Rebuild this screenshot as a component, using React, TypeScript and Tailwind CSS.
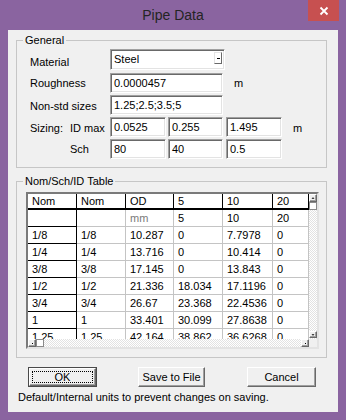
import React from "react";

const sunken =
  "bg-white border border-t-[#a0a0a0] border-l-[#a0a0a0] border-r-white border-b-white shadow-[inset_1px_1px_0_#696969,inset_-1px_-1px_0_#e3e3e3]";
const raised =
  "bg-[#f0f0f0] border border-t-white border-l-white border-r-[#696969] border-b-[#696969] shadow-[inset_-1px_-1px_0_#a0a0a0]";

function Field({ w, children }: { w: string; children?: React.ReactNode }) {
  return (
    <div className={`h-[20px] ${sunken} flex items-center pl-[3px] ${w}`}>
      <span className="leading-[13px]">{children}</span>
    </div>
  );
}

function Btn({ children, def, w }: { children: React.ReactNode; def?: boolean; w: string }) {
  if (def) {
    return (
      <div className={`h-[20px] ${w} border border-[#4a4a4a] flex`}>
        <div className={`flex-1 ${raised} flex p-[2px]`}>
          <div className="flex-1 border border-dotted border-black flex items-center justify-center leading-[13px] text-[11px]">
            {children}
          </div>
        </div>
      </div>
    );
  }
  return (
    <div className={`h-[20px] ${w} ${raised} flex items-center justify-center leading-[13px] text-[11px] whitespace-nowrap`}>
      {children}
    </div>
  );
}

const dither =
  "[background-image:repeating-conic-gradient(#e2e2e2_0%_25%,#ffffff_0%_50%)] [background-size:2px_2px]";

function Arrow({ dir }: { dir: "up" | "down" | "left" | "right" }) {
  const pts =
    dir === "up"
      ? "2,5 4,3 6,5"
      : dir === "down"
      ? "2,3 4,5 6,3"
      : dir === "left"
      ? "5,2 3,4 5,6"
      : "3,2 5,4 3,6";
  return (
    <svg width="8" height="8" viewBox="0 0 8 8" className="block">
      <polygon points={pts} fill="#000" />
    </svg>
  );
}

const header = ["Nom", "Nom", "OD", "5", "10", "20"];
const units = ["", "", "mm", "5", "10", "20"];
const rows = [
  ["1/8", "1/8", "10.287", "0", "7.7978", "0"],
  ["1/4", "1/4", "13.716", "0", "10.414", "0"],
  ["3/8", "3/8", "17.145", "0", "13.843", "0"],
  ["1/2", "1/2", "21.336", "18.034", "17.1196", "0"],
  ["3/4", "3/4", "26.67", "23.368", "22.4536", "0"],
  ["1", "1", "33.401", "30.099", "27.8638", "0"],
  ["1.25", "1.25", "42.164", "38.862", "36.6268", "0"],
];

function Table() {
  return (
    <div className="grid grid-cols-[49px_49px_48px_49px_50px_1fr] bg-white">
      {header.map((h, i) => (
        <div
          key={"h" + i}
          className="h-[16px] flex items-center pl-[4px] border-r border-b-2 border-r-black border-b-black whitespace-nowrap overflow-hidden"
        >
          {h}
        </div>
      ))}
      {units.map((u, i) => (
        <div
          key={"u" + i}
          className={`h-[17px] flex items-center pl-[4px] border-r border-b whitespace-nowrap overflow-hidden ${
            i === 0 ? "border-black" : "border-[#c4c4c4]"
          } ${i === 2 ? "text-[#7a7a7a]" : "text-black"}`}
        >
          {u}
        </div>
      ))}
      {rows.map((r, ri) =>
        r.map((c, i) => (
          <div
            key={ri + "-" + i}
            className={`h-[17px] flex items-center pl-[4px] border-r border-b whitespace-nowrap overflow-hidden ${
              i === 0 ? "border-black" : "border-[#c4c4c4]"
            }`}
          >
            {c}
          </div>
        ))
      )}
    </div>
  );
}

export default function App() {
  return (
    <div className="w-[346px] h-[420px] bg-[#8a64a0] flex flex-col font-['Liberation_Sans',Arial,sans-serif] text-[11px] leading-[13px] text-black">
      <div className="relative h-[30px] flex items-center justify-center shrink-0">
        <span className="text-[14px] leading-[16px] text-[#242424] font-['Liberation_Sans',Arial,sans-serif] mb-[1px]">
          Pipe Data
        </span>
        <div className="absolute right-[7px] top-0 w-[31px] h-[21px] bg-[#c75050] flex items-center justify-center">
          <svg width="10" height="10" viewBox="0 0 10 10">
            <path d="M1.5 1.5 L8.5 8.5 M8.5 1.5 L1.5 8.5" stroke="#fff" strokeWidth="1.8" />
          </svg>
        </div>
      </div>

      <div className="mx-[8px] h-[382px] bg-[#f0f0f0] pt-[4px] pl-[8px] pr-[11px] flex flex-col">
        {/* General */}
        <fieldset className="border border-[#c6c6c6] m-0 p-0">
          <legend className="ml-[6px] px-[2px] leading-[13px]">General</legend>
          <div className="pl-[13px] pt-[2px] pb-[8px] flex flex-col">
            <div className="flex items-center h-[21px] mb-[3px]">
              <div className="w-[80px] pt-[5px]">Material</div>
              <div className={`h-[21px] w-[115px] ${sunken} flex items-start pl-[3px] relative`}>
                <span className="mt-[3px] flex-1">Steel</span>
                <div className="mt-[2px] mr-[2px] w-[8px] h-[12px] bg-white border border-t-[#e3e3e3] border-l-[#e3e3e3] border-r-[#696969] border-b-[#696969] flex items-center justify-center">
                  <div className="w-[3px] h-[1px] bg-black mt-[1px]" />
                </div>
              </div>
            </div>
            <div className="flex items-center h-[20px] mb-[2px]">
              <div className="w-[80px] pt-[1px]">Roughness</div>
              <Field w="w-[113px]">0.0000457</Field>
              <div className="ml-[11px] pt-[1px]">m</div>
            </div>
            <div className="flex items-center h-[20px] mb-[2px]">
              <div className="w-[80px] pt-[2px]">Non-std sizes</div>
              <Field w="w-[113px]">1.25;2.5;3.5;5</Field>
            </div>
            <div className="flex items-center h-[20px] mb-[2px]">
              <div className="w-[40px] pt-[2px]">Sizing:</div>
              <div className="w-[40px] pt-[2px]">ID max</div>
              <Field w="w-[56px]">0.0525</Field>
              <div className="ml-[2px]">
                <Field w="w-[55px]">0.255</Field>
              </div>
              <div className="ml-[3px]">
                <Field w="w-[56px]">1.495</Field>
              </div>
              <div className="ml-[11px] pt-[2px]">m</div>
            </div>
            <div className="flex items-center h-[20px]">
              <div className="w-[40px]" />
              <div className="w-[40px] pt-[1px]">Sch</div>
              <Field w="w-[56px]">80</Field>
              <div className="ml-[2px]">
                <Field w="w-[55px]">40</Field>
              </div>
              <div className="ml-[3px]">
                <Field w="w-[56px]">0.5</Field>
              </div>
            </div>
          </div>
        </fieldset>

        {/* Table */}
        <fieldset className="border border-[#c6c6c6] m-0 p-0 mt-[7px]">
          <legend className="ml-[6px] px-[2px] leading-[13px]">Nom/Sch/ID Table</legend>
          <div className="pl-[9px] pr-[7px] pt-[4px] pb-[8px]">
            <div className="h-[157px] border-2 border-t-[#7a7a7a] border-l-[#7a7a7a] border-r-[#e3e3e3] border-b-[#e3e3e3] flex flex-col bg-white">
              <div className="flex flex-1 min-h-0">
                <div className="flex-1 overflow-hidden">
                  <Table />
                </div>
                <div className={`w-[8px] flex flex-col ${dither}`}>
                  <div className={`h-[8px] ${raised} flex items-center justify-center`}>
                    <Arrow dir="up" />
                  </div>
                  <div className="h-[8px] bg-white border border-[#8a8a8a]" />
                  <div className="flex-1" />
                  <div className={`h-[7px] ${raised} flex items-center justify-center mb-[1px]`}>
                    <Arrow dir="down" />
                  </div>
                </div>
              </div>
              <div className={`h-[8px] flex ${dither}`}>
                <div className={`w-[8px] ${raised} flex items-center justify-center`}>
                  <div className="w-[1px] h-[1px] bg-black" />
                </div>
                <div className="w-[8px] bg-white border border-[#8a8a8a]" />
                <div className="flex-1" />
                <div className={`w-[8px] ${raised} flex items-center justify-center`}>
                  <div className="w-[1px] h-[1px] bg-black" />
                </div>
                <div className="w-[8px] bg-[#f0f0f0]" />
              </div>
            </div>
          </div>
        </fieldset>

        {/* Buttons */}
        <div className="flex mt-[9px] pl-[12px]">
          <Btn def w="w-[69px]">OK</Btn>
          <div className="ml-[41px]">
            <Btn w="w-[67px]">Save to File</Btn>
          </div>
          <div className="ml-[42px]">
            <Btn w="w-[69px]">Cancel</Btn>
          </div>
        </div>

        <div className="mt-[4px] pl-[2px] leading-[13px]">
          Default/Internal units to prevent changes on saving.
        </div>
      </div>
    </div>
  );
}
